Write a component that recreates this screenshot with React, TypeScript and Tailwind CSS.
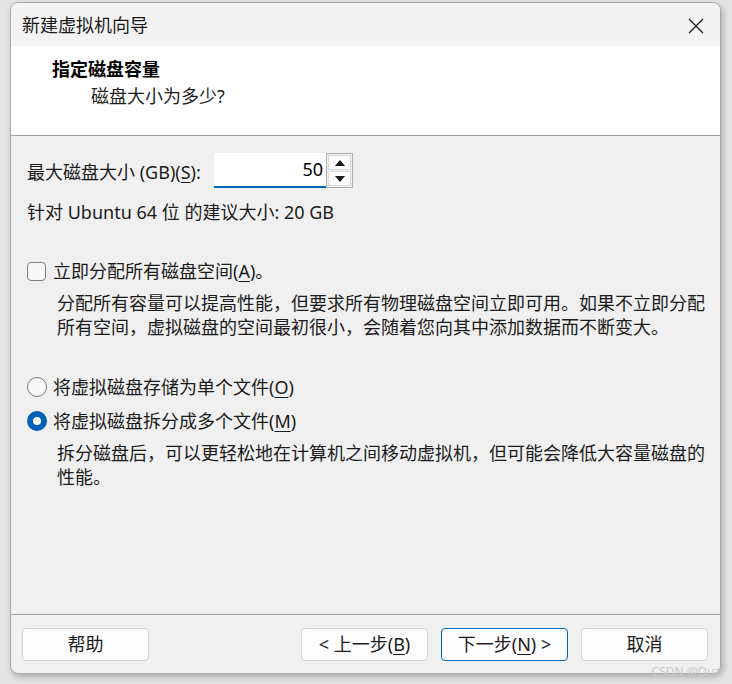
import React from "react";

const font = { fontFamily: '"Noto Sans", "Noto Sans CJK SC", sans-serif' };

function U({ children }: { children: React.ReactNode }) {
  return <span className="underline underline-offset-[3px] decoration-1">{children}</span>;
}

function Btn({ children, primary }: { children: React.ReactNode; primary?: boolean }) {
  return (
    <div
      className={
        "w-[127px] h-[33px] rounded-[4px] flex items-center justify-center text-[18px] text-[#1b1b1b] bg-[#fdfdfd] border " +
        (primary ? "border-[#0067c0]" : "border-[#d3d3d3]")
      }
    >
      {children}
    </div>
  );
}

export default function App() {
  return (
    <div className="relative w-[732px] h-[684px] bg-[#e4e4e4] pt-[2px] pl-[10px]" style={font}>
      <div className="w-[711px] h-[672px] rounded-[8px] border border-[#a9a9a9] bg-[#f0f0f0] overflow-hidden flex flex-col shadow-[2px_3px_6px_rgba(0,0,0,0.25)]">
        {/* title bar */}
        <div className="h-[43px] bg-[#f3f3f3] flex items-center justify-between pl-[11px] pr-[16px] shrink-0">
          <span className="text-[18px] text-[#1a1a1a] leading-none">新建虚拟机向导</span>
          <svg width="16" height="16" viewBox="0 0 16 16" className="mt-[2px]">
            <path d="M1 1 L15 15 M15 1 L1 15" stroke="#1a1a1a" strokeWidth="1.3" fill="none" />
          </svg>
        </div>
        {/* header */}
        <div className="h-[90px] bg-white border-b border-[#a0a0a0] shrink-0 pt-[11px]">
          <div className="pl-[41px] text-[18px] font-bold text-black leading-[24px]">指定磁盘容量</div>
          <div className="pl-[80px] mt-[3px] text-[18px] text-[#1f1f1f] leading-[24px]">磁盘大小为多少?</div>
        </div>
        {/* body */}
        <div className="flex-1 pl-[16px] text-[18px] text-[#1b1b1b]">
          <div className="mt-[17px] flex items-center h-[35px]">
            <span className="leading-[24px] mt-[3px]">
              最大磁盘大小 (GB)(<U>S</U>):
            </span>
          </div>
          <div className="-mt-[35px] ml-[187px] flex h-[35px]">
            <div className="w-[112px] h-[35px] bg-white border-b-2 border-[#0067c0] flex items-center justify-end pr-[3px] text-[18px] text-black">
              50
            </div>
            <div className="w-[27px] h-[35px] border border-[#b0b0b0] bg-[#f0f0f0] flex flex-col p-[1px] gap-[1px]">
              <div className="flex-1 bg-[#fdfdfd] border border-[#dadada] flex items-center justify-center">
                <svg width="10" height="6" viewBox="0 0 10 6"><path d="M0 6 L5 0 L10 6 Z" fill="#1a1a1a" /></svg>
              </div>
              <div className="flex-1 bg-[#fdfdfd] border border-[#dadada] flex items-center justify-center">
                <svg width="10" height="6" viewBox="0 0 10 6"><path d="M0 0 L5 6 L10 0 Z" fill="#1a1a1a" /></svg>
              </div>
            </div>
          </div>
          <div className="mt-[12px] leading-[24px]">针对 Ubuntu 64 位 的建议大小: 20 GB</div>

          <div className="mt-[35px] flex items-center h-[24px]">
            <div className="w-[19px] h-[19px] rounded-[4px] border border-[#7f7f7f] bg-[#f7f7f7] shrink-0" />
            <span className="ml-[7px] leading-[24px]">
              立即分配所有磁盘空间(<U>A</U>)。
            </span>
          </div>
          <div className="mt-[8px] pl-[30px] leading-[24px]">
            <div className="whitespace-nowrap">分配所有容量可以提高性能，但要求所有物理磁盘空间立即可用。如果不立即分配</div>
            <div className="whitespace-nowrap">所有空间，虚拟磁盘的空间最初很小，会随着您向其中添加数据而不断变大。</div>
          </div>

          <div className="mt-[36px] flex items-center h-[24px]">
            <div className="w-[20px] h-[20px] rounded-full border border-[#7a7a7a] bg-[#f7f7f7] shrink-0" />
            <span className="ml-[6px] leading-[24px]">
              将虚拟磁盘存储为单个文件(<U>O</U>)
            </span>
          </div>
          <div className="mt-[10px] flex items-center h-[24px]">
            <div className="w-[20px] h-[20px] rounded-full bg-[#005fb8] flex items-center justify-center shrink-0">
              <div className="w-[8px] h-[8px] rounded-full bg-white" />
            </div>
            <span className="ml-[6px] leading-[24px]">
              将虚拟磁盘拆分成多个文件(<U>M</U>)
            </span>
          </div>
          <div className="mt-[8px] pl-[30px] leading-[24px]">
            <div className="whitespace-nowrap">拆分磁盘后，可以更轻松地在计算机之间移动虚拟机，但可能会降低大容量磁盘的</div>
            <div>性能。</div>
          </div>
        </div>
        {/* footer */}
        <div className="h-[59px] border-t border-[#a0a0a0] shrink-0 flex items-start pt-[13px] pl-[11px] pr-[12px]">
          <Btn>帮助</Btn>
          <div className="flex-1" />
          <div className="flex gap-[13px]">
            <Btn>
              &lt; 上一步(<U>B</U>)
            </Btn>
            <Btn primary>
              下一步(<U>N</U>) &gt;
            </Btn>
            <Btn>取消</Btn>
          </div>
        </div>
      </div>
      <div className="absolute right-[12px] bottom-[6px] text-[12px] text-[#c8c8c8] leading-none">CSDN @Quz</div>
    </div>
  );
}
